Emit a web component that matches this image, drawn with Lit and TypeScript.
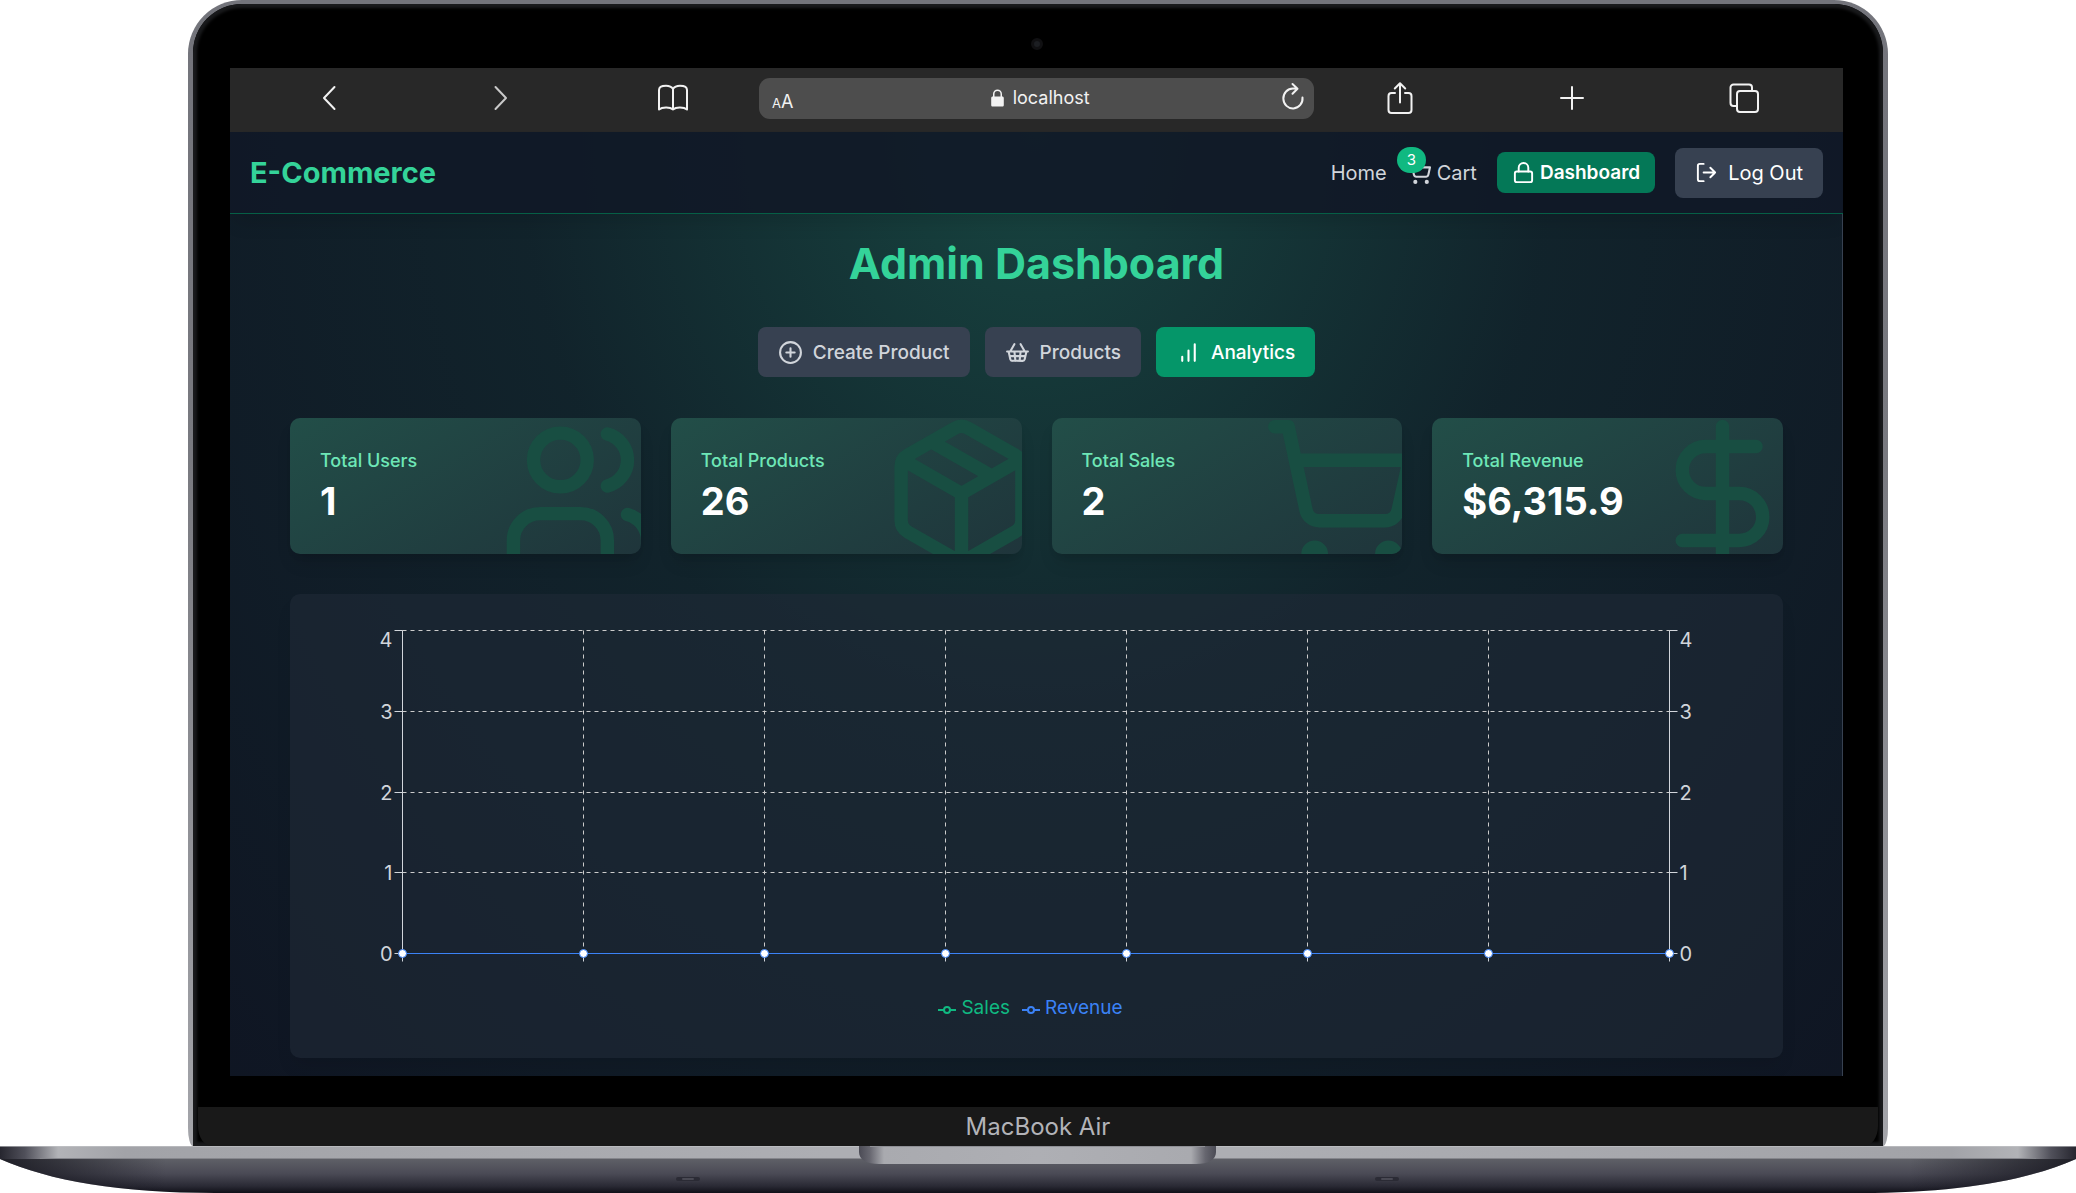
import { LitElement, html, svg, css } from "lit";
import { customElement, property, state } from "lit/decorators.js";
import { classMap } from "lit/directives/class-map.js";

const icons: Record<string, unknown> = {
  cart: svg`<circle cx="8" cy="21" r="1"/><circle cx="19" cy="21" r="1"/><path d="M2.05 2.05h2l2.66 12.42a2 2 0 0 0 2 1.58h9.78a2 2 0 0 0 1.95-1.57l1.65-7.43H5.12"/>`,
  lock: svg`<rect width="18" height="11" x="3" y="11" rx="2"/><path d="M7 11V7a5 5 0 0 1 10 0v4"/>`,
  logout: svg`<path d="M9 21H5a2 2 0 0 1-2-2V5a2 2 0 0 1 2-2h4M16 17l5-5-5-5M21 12H9"/>`,
  plusCircle: svg`<circle cx="12" cy="12" r="10"/><path d="M8 12h8M12 8v8"/>`,
  basket: svg`<path d="m15 11-1 9M19 11l-4-7M2 11h20M3.5 11l1.6 7.4a2 2 0 0 0 2 1.6h9.8c.9 0 1.8-.7 2-1.6l1.7-7.4M4.5 15.5h15M5 11l4-7M9 11l1 9"/>`,
  bars: svg`<path d="M12 20V10M18 20V4M6 20v-4"/>`,
  users: svg`<path d="M16 21v-2a4 4 0 0 0-4-4H6a4 4 0 0 0-4 4v2"/><circle cx="9" cy="7" r="4"/><path d="M22 21v-2a4 4 0 0 0-3-3.87M16 3.13a4 4 0 0 1 0 7.75"/>`,
  box: svg`<path d="m7.5 4.27 9 5.15M21 8a2 2 0 0 0-1-1.73l-7-4a2 2 0 0 0-2 0l-7 4A2 2 0 0 0 3 8v8a2 2 0 0 0 1 1.73l7 4a2 2 0 0 0 2 0l7-4A2 2 0 0 0 21 16ZM3.3 7l8.7 5 8.7-5M12 22V12"/>`,
  dollar: svg`<path d="M12 2v20M17 5H9.5a3.5 3.5 0 0 0 0 7h5a3.5 3.5 0 0 1 0 7H6"/>`,
};

const icon = (name: string) =>
  html`<svg class="icon" viewBox="0 0 24 24" aria-hidden="true">${icons[name]}</svg>`;

@customElement("browser-bar")
export class BrowserBar extends LitElement {
  static styles = css`
    :host {
      display: flex;
      align-items: center;
      height: 64px;
      padding: 0 13px;
      background: #282828;
      color: #f2f2f2;
      box-sizing: border-box;
      font-family: Inter, "Liberation Sans", sans-serif;
    }
    button {
      display: flex;
      align-items: center;
      justify-content: center;
      border: 0;
      padding: 0;
      background: none;
      color: inherit;
      font: inherit;
      cursor: pointer;
    }
    .tool {
      flex: 1;
      height: 50px;
      padding-bottom: 4px;
    }
    svg {
      display: block;
      fill: none;
      stroke: currentColor;
      stroke-width: 2;
      stroke-linecap: round;
      stroke-linejoin: round;
    }
    .dim {
      color: #c9c9c9;
    }
    .address {
      flex: 0 0 555px;
      box-sizing: border-box;
      display: flex;
      align-items: center;
      justify-content: space-between;
      height: 41px;
      margin-bottom: 4px;
      padding: 0 9px 0 13px;
      border-radius: 11px;
      background: #4d4d4d;
    }
    .size {
      align-items: baseline;
      padding-top: 7px;
    }
    .small {
      font-size: 13px;
    }
    .large {
      font-size: 18px;
    }
    .site {
      display: flex;
      align-items: center;
      gap: 9px;
      padding-left: 9px;
    }
    .reload {
      padding-bottom: 4px;
    }
    input {
      width: 80px;
      border: 0;
      padding: 0;
      background: none;
      color: inherit;
      font: 18px/24px Inter, "Liberation Sans", sans-serif;
      outline: 0;
    }
    .filled {
      fill: currentColor;
      stroke: none;
    }
  `;

  render() {
    return html`
      <button class="tool" aria-label="Back">
        <svg width="16" height="26" viewBox="0 0 16 26"><path d="M13.500 2 3 13l10.500 11"/></svg>
      </button>
      <button class="tool dim" aria-label="Forward">
        <svg width="16" height="26" viewBox="0 0 16 26"><path d="M2.500 2 13 13 2.500 24"/></svg>
      </button>
      <button class="tool" aria-label="Bookmarks">
        <svg width="32" height="28" viewBox="0 0 32 28"><path d="M16 5C14.500 2.600 11.800 1.800 9 1.800 5 1.800 2 3 2 6v19.500c3-2.500 11-2.800 14 0 3-2.800 11-2.500 14 0V6c0-3-3-4.200-7-4.200-2.800 0-5.500.8-7 3.200zv20.500"/></svg>
      </button>
      <div class="address">
        <button class="size" aria-label="Text size"><span class="small">A</span><span class="large">A</span></button>
        <div class="site">
          <svg class="filled" width="13" height="18" viewBox="0 0 13 18"><path fill-rule="evenodd" d="M2 7.500V5a4.500 4.500 0 0 1 9 0v2.500h.3c.9 0 1.500.6 1.500 1.500v7c0 1-.6 1.600-1.500 1.600H1.700C.8 17.600.2 17 .2 16V9c0-.9.6-1.500 1.500-1.500zm1.500 0h6V5a3 3 0 0 0-6 0z"/></svg>
          <input aria-label="Address" value="localhost" />
        </div>
        <button class="reload" aria-label="Reload">
          <svg width="24" height="28" viewBox="0 0 24 28"><path d="M21.500 15.500A9.600 10 0 1 1 12 6.500l4 .2M11.500 2l5 4.700-5 5"/></svg>
        </button>
      </div>
      <button class="tool" aria-label="Share">
        <svg width="26" height="34" viewBox="0 0 26 34"><path d="M8 12H4.500A3 3 0 0 0 1.500 15v14a3 3 0 0 0 3 3h17a3 3 0 0 0 3-3V15a3 3 0 0 0-3-3H18M13 21.500V2.500M7.800 7.500 13 2.300l5.200 5.200"/></svg>
      </button>
      <button class="tool" aria-label="New tab">
        <svg width="24" height="24" viewBox="0 0 24 24"><path d="M12 1v22M1 12h22"/></svg>
      </button>
      <button class="tool" aria-label="Show tabs">
        <svg width="30" height="30" viewBox="0 0 30 30"><rect x="8" y="8" width="21" height="21" rx="3"/><path d="M8 23H4.500a3 3 0 0 1-3-3V4.500a3 3 0 0 1 3-3H20a3 3 0 0 1 3 3V8"/></svg>
      </button>
    `;
  }
}

@customElement("stat-card")
export class StatCard extends LitElement {
  @property() label = "";
  @property() value = "";
  @property() icon = "";

  static styles = css`
    :host {
      position: relative;
      display: block;
      overflow: hidden;
      padding: 30px;
      border-radius: 10px;
      background: linear-gradient(150deg, #224e48, #1f353b);
      box-shadow: 0 12px 18px -4px rgba(0, 0, 0, 0.12), 0 5px 8px -5px rgba(0, 0, 0, 0.12);
    }
    .text {
      position: relative;
      display: flex;
      flex-direction: column;
      gap: 5px;
    }
    .label {
      margin: 0;
      color: #6ee7b7;
      font-size: 18px;
      line-height: 26px;
      font-weight: 500;
    }
    .value {
      margin: 0;
      color: #fff;
      font-size: 38px;
      line-height: 45px;
      font-weight: 700;
    }
    .icon {
      position: absolute;
      right: -20px;
      bottom: -20px;
      width: 161px;
      height: 161px;
      fill: none;
      stroke: #184e42;
      stroke-width: 2;
      stroke-linecap: round;
      stroke-linejoin: round;
    }
  `;

  render() {
    return html`
      ${icon(this.icon)}
      <div class="text">
        <p class="label">${this.label}</p>
        <p class="value">${this.value}</p>
      </div>
    `;
  }
}

@customElement("sales-chart")
export class SalesChart extends LitElement {
  static styles = css`
    :host {
      display: block;
      padding: 30px;
      border-radius: 10px;
      background: rgba(31, 41, 55, 0.6);
      box-shadow: 0 12px 18px -4px rgba(0, 0, 0, 0.1);
    }
    .plot {
      display: block;
      width: 100%;
      height: auto;
    }
    .grid {
      stroke: #ccc;
      stroke-dasharray: 4 4;
    }
    .axis {
      stroke: #d1d5db;
    }
    .tick {
      fill: #d1d5db;
      font-size: 20px;
    }
    .series {
      stroke: #3b82f6;
      fill: #fff;
    }
    .legend {
      display: flex;
      justify-content: center;
      gap: 12px;
      margin: 0;
      padding: 30px 12px 7px 0;
      list-style: none;
      font-size: 19px;
      line-height: 26px;
    }
    .entry {
      display: flex;
      align-items: center;
      gap: 5px;
    }
    .sales {
      color: #10b981;
    }
    .revenue {
      color: #3b82f6;
    }
    .key {
      margin-top: 3px;
      fill: none;
      stroke: currentColor;
      stroke-width: 2;
    }
  `;

  render() {
    const left = 82;
    const step = 181;
    const right = left + 7 * step;
    const rows = [4, 3, 2, 1, 0].map((n, i) => ({ n, y: 6 + Math.round(i * 80.75) }));
    const columns = Array.from({ length: 8 }, (_, i) => left + i * step);
    return html`
      <svg class="plot" viewBox="0 0 1433 341" role="img" aria-label="Sales and revenue">
        <g transform="translate(.5 .5)">
          ${rows.map(
            (r) => svg`
            <line class="grid" x1=${left} x2=${right} y1=${r.y} y2=${r.y} />
            <line class="axis" x1=${left - 8} x2=${left} y1=${r.y} y2=${r.y} />
            <line class="axis" x1=${right} x2=${right + 8} y1=${r.y} y2=${r.y} />
            <text class="tick" text-anchor="end" x=${left - 10} y=${r.n === 4 ? r.y + 16 : r.y + 7}>${r.n}</text>
            <text class="tick" x=${right + 10} y=${r.n === 4 ? r.y + 16 : r.y + 7}>${r.n}</text>`
          )}
          ${columns.map(
            (x) => svg`
            <line class="grid" x1=${x} x2=${x} y1="6" y2="329" />
            <line class="axis" x1=${x} x2=${x} y1="329" y2="337" />`
          )}
          <line class="axis" x1=${left} x2=${left} y1="6" y2="329" />
          <line class="axis" x1=${right} x2=${right} y1="6" y2="329" />
          <line class="series" x1=${left} x2=${right} y1="329" y2="329" />
          ${columns.map((x) => svg`<circle class="series" cx=${x} cy="329" r="4" />`)}
        </g>
      </svg>
      <ul class="legend">
        ${["Sales", "Revenue"].map(
          (name) => html`<li class="entry ${name.toLowerCase()}">
            <svg class="key" width="18" height="10" viewBox="0 0 18 10" aria-hidden="true">
              <path d="M0 5h6M12 5h6" /><circle cx="9" cy="5" r="3" />
            </svg>
            ${name}
          </li>`
        )}
      </ul>
    `;
  }
}

@customElement("app-root")
export class AppRoot extends LitElement {
  @state() private tab = "Analytics";

  private tabs = [
    { name: "Create Product", icon: "plusCircle" },
    { name: "Products", icon: "basket" },
    { name: "Analytics", icon: "bars" },
  ];

  private stats = [
    { label: "Total Users", value: "1", icon: "users" },
    { label: "Total Products", value: "26", icon: "box" },
    { label: "Total Sales", value: "2", icon: "cart" },
    { label: "Total Revenue", value: "$6,315.9", icon: "dollar" },
  ];

  static styles = css`
    :host {
      display: block;
      background: #fff;
      font-family: Inter, "Liberation Sans", sans-serif;
      font-size: 19px;
    }
    .lid {
      margin: 0 188px;
      padding: 4px 5px 0;
      border-radius: 54px 54px 5px 5px / 54px 54px 18px 18px;
      background: linear-gradient(#73747b, #797a80 40%, #a4a5aa);
    }
    .bezel {
      padding: 0 40px 0 37px;
      border-radius: 49px 49px 0 0;
      background: #000;
      box-shadow: inset 0 0 3px 4px #191a1c;
    }
    .camera-row {
      display: flex;
      justify-content: center;
      align-items: center;
      height: 48px;
      padding-top: 16px;
    }
    .camera {
      width: 6px;
      height: 6px;
      border: 3px solid #101012;
      border-radius: 50%;
      background: #1c1e22;
    }
    .page {
      background: radial-gradient(
          ellipse at top,
          rgba(40, 180, 128, 0.29) 0%,
          rgba(18, 80, 60, 0.2) 45%,
          rgba(0, 0, 0, 0.1) 100%
        ),
        #111827;
    }
    .nav {
      display: flex;
      align-items: center;
      justify-content: space-between;
      height: 81px;
      padding: 0 20px;
      border-bottom: 1px solid #065f46;
      background: rgba(17, 24, 39, 0.9);
      box-shadow: 0 12px 18px -4px rgba(0, 0, 0, 0.12);
    }
    .brand {
      color: #34d399;
      font-size: 29px;
      font-weight: 700;
      text-decoration: none;
    }
    .links {
      display: flex;
      align-items: center;
      gap: 20px;
      font-size: 20px;
    }
    .link {
      position: relative;
      display: flex;
      align-items: center;
      gap: 5px;
      color: #d1d5db;
      text-decoration: none;
    }
    .badge {
      position: absolute;
      left: -10px;
      top: -13px;
      padding: 3px 10px;
      border-radius: 13px;
      background: #10b981;
      color: #fff;
      font-size: 15px;
      line-height: 20px;
    }
    .icon {
      width: 25px;
      height: 25px;
      flex: none;
      fill: none;
      stroke: currentColor;
      stroke-width: 2;
      stroke-linecap: round;
      stroke-linejoin: round;
    }
    .button {
      display: flex;
      align-items: center;
      gap: 10px;
      height: 50px;
      padding: 0 20px;
      border: 0;
      border-radius: 8px;
      background: #374151;
      color: #fff;
      font: inherit;
      text-decoration: none;
      cursor: pointer;
    }
    .button.compact {
      gap: 5px;
      height: 41px;
      padding: 0 15px;
      background: #047857;
      font-size: 19px;
      font-weight: 600;
    }
    .links .button .icon {
      width: 23px;
      height: 23px;
    }
    .content {
      padding: 24px 59px 18px 60px;
      border-right: 1px solid #374151;
    }
    .title {
      margin: 0 0 39px;
      color: #34d399;
      font-size: 43px;
      line-height: 50px;
      font-weight: 700;
      text-align: center;
    }
    .tabs {
      display: flex;
      justify-content: center;
      gap: 15px;
      margin-bottom: 41px;
    }
    .tabs .button {
      color: #d1d5db;
      font-weight: 500;
    }
    .tabs .button.active {
      background: #059669;
      color: #fff;
    }
    .stats {
      display: grid;
      grid-template-columns: repeat(4, 1fr);
      gap: 30px;
      margin-bottom: 40px;
    }
    .bottom {
      height: 31px;
    }
    .chin {
      margin: 0 -35px 0 -32px;
      border-radius: 0 0 14px 14px / 0 0 20px 20px;
      background: #191919;
      color: #b2b3b8;
      font-size: 24px;
      line-height: 39px;
      text-align: center;
    }
    .base {
      display: block;
      width: 100%;
      height: 47px;
    }
  `;

  render() {
    return html`
      <div class="lid">
        <div class="bezel">
          <div class="camera-row"><span class="camera"></span></div>
          <browser-bar></browser-bar>
          <div class="page">
            <header class="nav">
              <a class="brand" href="#">E-Commerce</a>
              <nav class="links">
                <a class="link" href="#">Home</a>
                <a class="link" href="#cart">${icon("cart")}<span class="badge">3</span>Cart</a>
                <a class="button compact" href="#dashboard">${icon("lock")}Dashboard</a>
                <button class="button">${icon("logout")}Log Out</button>
              </nav>
            </header>
            <main class="content">
              <h1 class="title">Admin Dashboard</h1>
              <div class="tabs">
                ${this.tabs.map(
                  (t) => html`<button
                    class=${classMap({ button: true, active: t.name === this.tab })}
                    @click=${() => (this.tab = t.name)}
                  >
                    ${icon(t.icon)}${t.name}
                  </button>`
                )}
              </div>
              <section class="stats">
                ${this.stats.map(
                  (s) => html`<stat-card .label=${s.label} .value=${s.value} .icon=${s.icon}></stat-card>`
                )}
              </section>
              <sales-chart></sales-chart>
            </main>
          </div>
          <div class="bottom"></div>
          <div class="chin">MacBook Air</div>
        </div>
      </div>
      <svg class="base" viewBox="0 0 2076 47" preserveAspectRatio="none" aria-hidden="true">
        <defs>
          <linearGradient id="under" x2="0" y2="1">
            <stop offset="0" stop-color="#606168" />
            <stop offset=".45" stop-color="#4a4a55" />
            <stop offset=".8" stop-color="#2a2a35" />
            <stop offset="1" stop-color="#101018" />
          </linearGradient>
          <linearGradient id="edge">
            <stop offset="0" stop-color="#26262f" />
            <stop offset=".012" stop-color="#50505a" />
            <stop offset=".028" stop-color="#b2b3b7" />
            <stop offset=".06" stop-color="#a2a3a8" />
            <stop offset=".4" stop-color="#adaeb3" />
            <stop offset=".6" stop-color="#adaeb3" />
            <stop offset=".94" stop-color="#a2a3a8" />
            <stop offset=".972" stop-color="#b2b3b7" />
            <stop offset=".988" stop-color="#50505a" />
            <stop offset="1" stop-color="#26262f" />
          </linearGradient>
          <linearGradient id="shade">
            <stop offset="0" stop-color="#101018" stop-opacity=".8" />
            <stop offset=".08" stop-color="#101018" stop-opacity="0" />
            <stop offset=".92" stop-color="#101018" stop-opacity="0" />
            <stop offset="1" stop-color="#101018" stop-opacity=".8" />
          </linearGradient>
          <linearGradient id="notch">
            <stop offset="0" stop-color="#4b4b55" />
            <stop offset=".03" stop-color="#66666f" />
            <stop offset=".07" stop-color="#a9aaaf" />
            <stop offset=".5" stop-color="#aeafb4" />
            <stop offset=".93" stop-color="#a9aaaf" />
            <stop offset=".97" stop-color="#66666f" />
            <stop offset="1" stop-color="#4b4b55" />
          </linearGradient>
        </defs>
        <path fill="url(#under)" d="M0 12v1c50 22 120 34 215 34h1646c95 0 165-12 215-34v-1z" />
        <path fill="url(#shade)" d="M0 12v1c50 22 120 34 215 34h1646c95 0 165-12 215-34v-1z" />
        <path fill="url(#edge)" d="M0 0h2076v13H0z" />
        <path fill="#c5c6c9" fill-opacity=".6" d="M0 0h2076v1H0z" />
        <path fill="#85868c" d="M40 12h1996v1H40z" />
        <path fill="url(#notch)" d="M859 0h357v6c0 8-8 12-20 12H879c-12 0-20-4-20-12z" />
        <path fill="#8f9096" d="M870 0h335v1H870z" />
        <g fill="#2b2b35">
          <rect x="676" y="31" width="24" height="4" rx="2" />
          <rect x="1375" y="31" width="24" height="4" rx="2" />
        </g>
        <g fill="#4a4a54">
          <rect x="682" y="32" width="12" height="2" rx="1" />
          <rect x="1381" y="32" width="12" height="2" rx="1" />
        </g>
      </svg>
    `;
  }
}
